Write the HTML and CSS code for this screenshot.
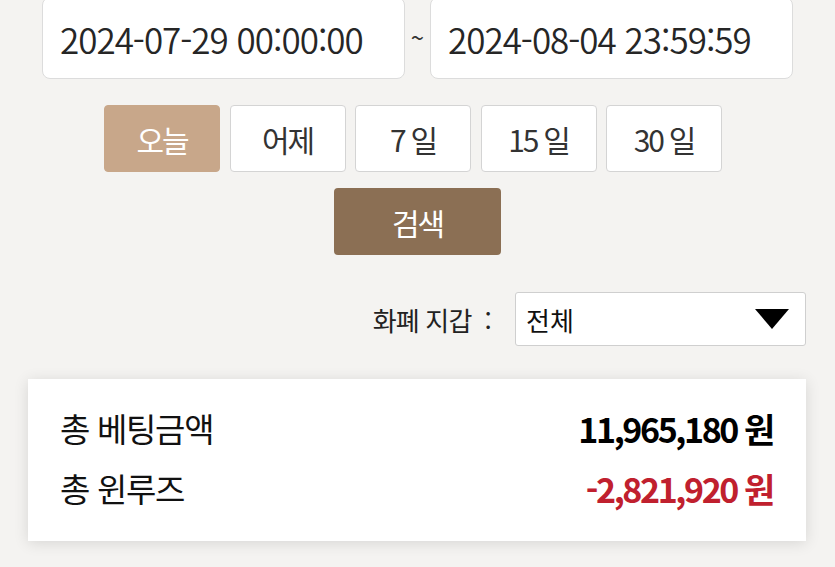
FILE: index.html
```html
<!DOCTYPE html>
<html lang="ko">
<head>
<meta charset="utf-8">
<link rel="stylesheet" href="styles.css">
</head>
<body>
<div class="page">
  <div class="date-row">
    <div class="date-input">2024-07-29 00:00:00</div>
    <span class="tilde">~</span>
    <div class="date-input">2024-08-04 23:59:59</div>
  </div>
  <div class="quick-row">
    <button class="qbtn active">오늘</button>
    <button class="qbtn">어제</button>
    <button class="qbtn">7 일</button>
    <button class="qbtn">15 일</button>
    <button class="qbtn">30 일</button>
  </div>
  <div class="search-row">
    <button class="search">검색</button>
  </div>
  <div class="filter-row">
    <span class="filter-label">화폐 지갑 &nbsp;:</span>
    <div class="select">
      <span>전체</span>
      <svg class="caret" width="34" height="20" viewBox="0 0 34 20"><polygon points="0,0 34,0 17,20" fill="#000"/></svg>
    </div>
  </div>
  <div class="card">
    <div class="sum-row">
      <span class="sum-label">총 베팅금액</span>
      <span class="sum-value">11,965,180 원</span>
    </div>
    <div class="sum-row">
      <span class="sum-label">총 윈루즈</span>
      <span class="sum-value neg">-2,821,920 원</span>
    </div>
  </div>
</div>
</body>
</html>
```
FILE: styles.css
```css
html, body {
  margin: 0;
  padding: 0;
  background: #f4f3f1;
  font-family: "Noto Sans CJK KR", "Noto Sans", sans-serif;
  color: #222;
  overflow: hidden;
}
.page {
  width: 835px;
  height: 567px;
}
.date-row {
  display: flex;
  align-items: center;
  padding-left: 42px;
  margin-top: -3px;
}
.date-input {
  box-sizing: border-box;
  width: 363px;
  height: 82px;
  background: #fff;
  border: 1.5px solid #dcdcdc;
  border-radius: 8px;
  padding-left: 17px;
  display: flex;
  align-items: center;
  font-size: 35px;
  font-weight: 350;
  letter-spacing: -1px;
  color: #262626;
  padding-top: 0;
}
.tilde {
  width: 25px;
  text-align: center;
  font-size: 24px;
  color: #333;
  margin-top: -4px;
}
.quick-row {
  display: flex;
  gap: 9.5px;
  padding-left: 104px;
  margin-top: 26px;
}
.qbtn {
  box-sizing: border-box;
  width: 116px;
  height: 67px;
  background: #fff;
  border: 1.5px solid #d4d4d4;
  border-radius: 4px;
  font-family: inherit;
  font-size: 30px;
  letter-spacing: -2.2px;
  color: #333;
  padding: 0;
}
.qbtn.active {
  background: #c8a78a;
  border-color: #c8a78a;
  color: #fff;
}
.search-row {
  display: flex;
  padding-left: 334px;
  margin-top: 16px;
}
.search {
  width: 167px;
  height: 67px;
  background: #8b6f54;
  border: none;
  border-radius: 4px;
  font-family: inherit;
  font-size: 30px;
  letter-spacing: -2.2px;
  color: #fff;
  padding: 0;
}
.filter-row {
  display: flex;
  align-items: center;
  justify-content: flex-end;
  padding-right: 29px;
  margin-top: 37px;
}
.filter-label {
  font-size: 26px;
  color: #222;
  margin-right: 24px;
  letter-spacing: -0.8px;
}
.select {
  box-sizing: border-box;
  width: 291px;
  height: 54px;
  background: #fff;
  border: 1.5px solid #cfcfcf;
  border-radius: 3px;
  display: flex;
  align-items: center;
  justify-content: space-between;
  padding: 0 16px 0 10px;
  font-size: 26px;
  color: #111;
}
.caret {
  display: block;
}
.card {
  box-sizing: border-box;
  height: 162px;
  margin: 33px 29px 0 28px;
  background: #fff;
  box-shadow: 0 2px 14px rgba(0,0,0,0.12);
  padding: 19px 33px 23px 32px;
}
.sum-row {
  display: flex;
  justify-content: space-between;
  align-items: center;
  height: 60px;
}
.sum-label {
  font-size: 33px;
  letter-spacing: -1.3px;
  color: #111;
}
.sum-value {
  font-size: 34px;
  font-weight: 700;
  letter-spacing: -2.4px;
  color: #000;
}
.sum-value.neg {
  color: #c0202e;
}
```
